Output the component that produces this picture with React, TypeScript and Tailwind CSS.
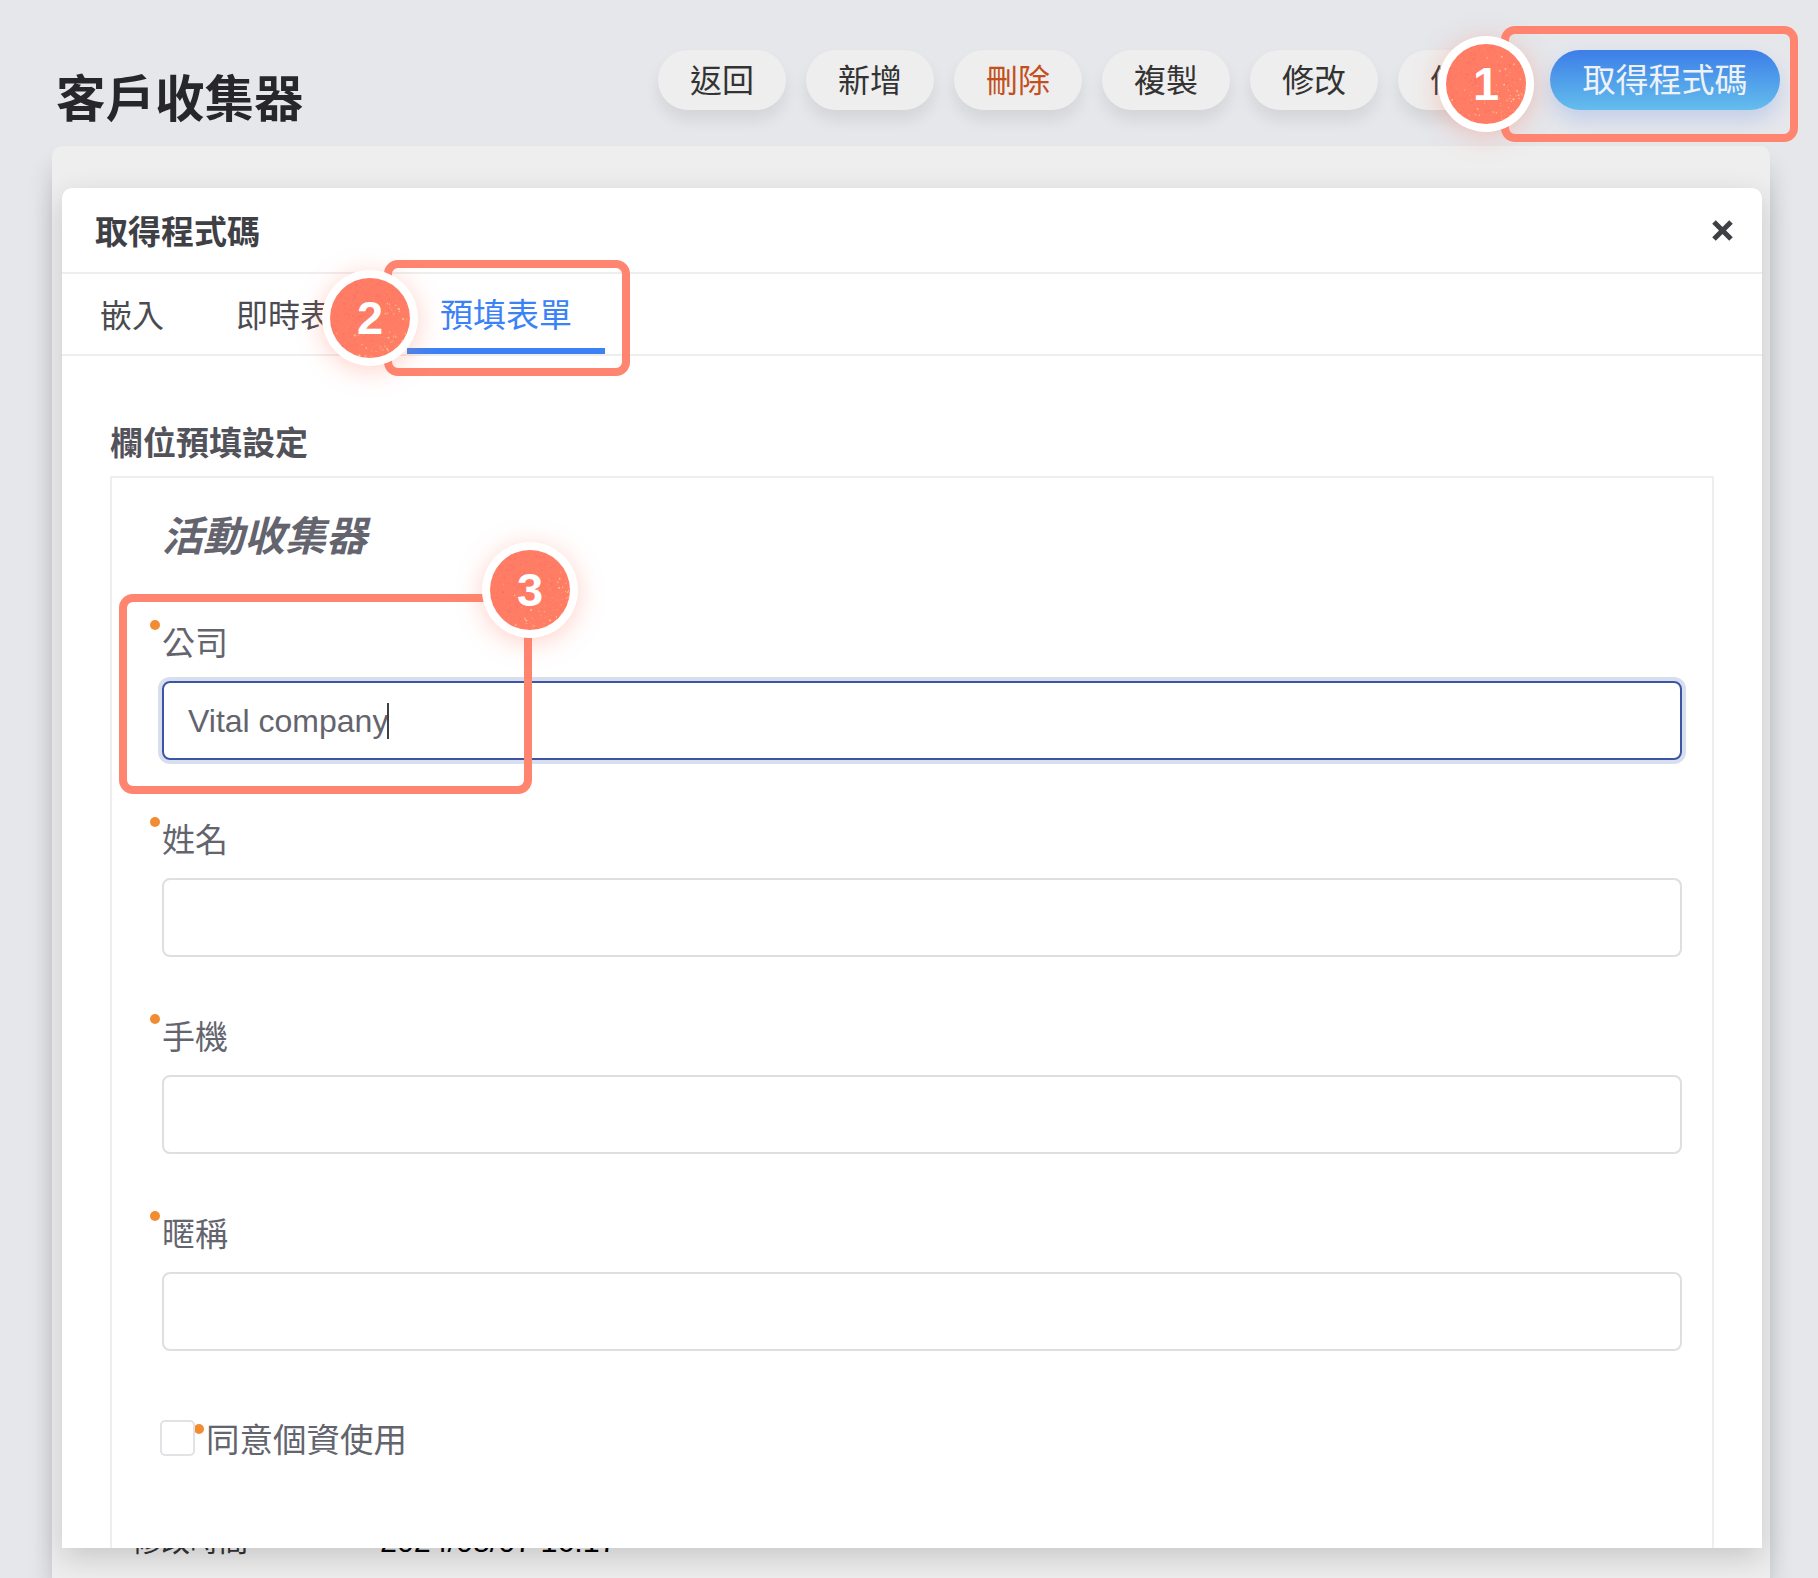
import React from "react";

const CJK = "font-['Noto_Sans_CJK_TC','Noto_Sans_CJK_SC',sans-serif]";

// deterministic speckle texture on the numbered badges
function makeSpeckles(seed: number) {
  let s = seed;
  const next = () => {
    s = (s * 16807) % 2147483647;
    return s / 2147483647;
  };
  const dots: { x: number; y: number; r: number; c: string; o: number }[] = [];
  for (let i = 0; i < 420; i++) {
    const x = next() * 80;
    const y = next() * 80;
    const weight = (x * 0.9 + y * 1.1) / 160;
    const warm = next() < weight * weight * weight * 2.2;
    dots.push({
      x,
      y,
      r: warm ? 0.25 + next() * next() * 1.1 : 0.4 + next() * 0.7,
      c: warm ? "#ffcf8e" : "#f2616b",
      o: warm ? 0.45 + next() * 0.55 : 0.12 + next() * 0.22,
    });
  }
  return dots;
}

function Badge({ n, seed, className }: { n: string; seed: number; className: string }) {
  const dots = makeSpeckles(seed);
  return (
    <div
      className={`absolute h-[96px] w-[96px] rounded-full bg-white shadow-[0_4px_26px_rgba(255,120,95,0.35)] ${className}`}
    >
      <div className="absolute left-[8px] top-[8px] flex h-[80px] w-[80px] items-center justify-center overflow-hidden rounded-full bg-[#ff7c65] pb-[2px]">
        <svg className="absolute inset-0" width="80" height="80" viewBox="0 0 80 80">
          {dots.map((d, i) => (
            <circle key={i} cx={d.x} cy={d.y} r={d.r} fill={d.c} opacity={d.o} />
          ))}
        </svg>
        <span className="relative font-['Liberation_Sans',sans-serif] text-[47px] font-bold leading-none text-white">
          {n}
        </span>
      </div>
    </div>
  );
}

function Field({ label, value, focused }: { label: string; value?: string; focused?: boolean }) {
  return (
    <div className="mb-[53px]">
      <div className="relative h-[48px] text-[33px] leading-[50px] text-[#63646e]">
        <span className="absolute left-[-12px] top-[4px] h-[10px] w-[10px] rounded-full bg-[#f28c33]" />
        {label}
      </div>
      <div
        className={
          focused
            ? "relative mt-[17px] flex h-[79px] w-[1520px] items-center rounded-[8px] border-2 border-[#3b55a5] pl-[24px] shadow-[0_0_0_4px_#d8deed]"
            : "relative mt-[17px] flex h-[79px] w-[1520px] items-center rounded-[8px] border-2 border-[#dedee3] pl-[24px]"
        }
      >
        {value && (
          <span className="font-['Liberation_Sans',sans-serif] text-[32px] leading-[40px] text-[#63646e]">
            {value}
          </span>
        )}
        {focused && <span className="ml-[-1px] h-[36px] w-[2px] bg-[#3f3f46]" />}
      </div>
    </div>
  );
}

export default function App() {
  const pills = [
    { t: "返回", c: "text-[#333333]" },
    { t: "新增", c: "text-[#333333]" },
    { t: "刪除", c: "text-[#c2501e]" },
    { t: "複製", c: "text-[#333333]" },
    { t: "修改", c: "text-[#333333]" },
    { t: "停用", c: "text-[#333333]" },
  ];
  return (
    <div className={`relative h-[1578px] w-full overflow-hidden bg-[#e5e7eb] ${CJK}`}>
      {/* page header */}
      <header className="flex h-[146px] items-start justify-between pl-[56px] pr-[38px] pt-[50px]">
        <h1 className="mt-[12px] text-[49.5px] font-bold leading-[68px] text-[#27272a]">客戶收集器</h1>
        <div className="flex gap-[20px]">
          {pills.map((p) => (
            <button
              key={p.t}
              className={`flex h-[60px] w-[128px] items-center justify-center rounded-full bg-[#eeeeee] pb-[4px] text-[32px] leading-none shadow-[0_10px_15px_rgba(0,0,0,0.08)] ${p.c}`}
            >
              {p.t}
            </button>
          ))}
          <button className="ml-[4px] flex h-[60px] w-[230px] items-center justify-center rounded-full bg-gradient-to-b from-[#3d7de8] to-[#65bdec] pb-[4px] text-[33px] leading-none text-[#eef2f7] shadow-[0_10px_20px_rgba(60,110,230,0.2)]">
            取得程式碼
          </button>
        </div>
      </header>

      {/* page card behind the dialog */}
      <section className="relative ml-[52px] mr-[48px] h-[1432px] rounded-t-[10px] bg-[#eeeeee] pl-[80px] pt-[1373px] shadow-[0_20px_25px_rgba(0,0,0,0.16)]">
        <div className="flex items-start text-[29px] leading-[40px] text-[#333333]">
          <span className="w-[248px]">修改時間</span>
          <span className="mt-[2px] font-['Liberation_Sans',sans-serif] text-[30.4px] text-black">2024/05/07 16:17</span>
        </div>

        {/* dialog */}
        <div className="absolute left-[10px] top-[42px] h-[1360px] w-[1700px] overflow-hidden rounded-t-[10px] bg-white shadow-[0_10px_30px_rgba(0,0,0,0.16)]">
          <div className="flex h-[86px] items-center justify-between border-b-2 border-[#eeeeee] pl-[33px] pr-[29px]">
            <h2 className="text-[33px] font-bold leading-[48px] text-[#3f3f46]">取得程式碼</h2>
            <svg width="21" height="21" viewBox="0 0 21 21" fill="none" stroke="#3f3f46" strokeWidth="5">
              <path d="M2 2 L19 19 M19 2 L2 19" />
            </svg>
          </div>
          <div className="flex h-[82px] gap-[6px] border-b-2 border-[#eeeeee] pl-[5px]">
            <div className="flex h-[78px] items-center px-[33px] text-[32px] text-[#4b4b52]">嵌入</div>
            <div className="flex h-[78px] items-center px-[33px] text-[32px] text-[#4b4b52]">即時表單</div>
            <div className="ml-[4px] flex h-[80px] w-[198px] items-center justify-center border-b-[6px] border-[#3b82f6] pt-[6px] text-[33px] text-[#3b82f6]">
              預填表單
            </div>
          </div>
          <div className="pl-[48px] pr-[48px] pt-[61px]">
            <h3 className="mb-[11px] text-[33px] font-bold leading-[48px] text-[#52525b]">欄位預填設定</h3>
            <div className="h-[1200px] border-2 border-[#eeeeee] pl-[50px] pt-[27px]">
              <div className="mb-[55px] text-[41px] font-bold italic leading-[56px] text-[#63646e]">活動收集器</div>
              <Field label="公司" value="Vital company" focused />
              <Field label="姓名" />
              <Field label="手機" />
              <Field label="暱稱" />
              <div className="mt-[69px] flex h-[36px] items-center">
                <div className="relative z-10 ml-[-2px] h-[36px] w-[35px] rounded-[5px] border-2 border-[#e2e2e6] bg-white" />
                <span className="mb-[18px] ml-[-1px] h-[10px] w-[10px] rounded-full bg-[#f28c33]" />
                <span className="ml-[2px] text-[33.5px] leading-[48px] text-[#63646e]">同意個資使用</span>
              </div>
            </div>
          </div>
        </div>
      </section>

      {/* tutorial annotations */}
      <div className="absolute left-[1501px] top-[26px] h-[116px] w-[297px] rounded-[14px] border-[8px] border-[#ff8570]" />
      <div className="absolute left-[384px] top-[260px] h-[116px] w-[246px] rounded-[14px] border-[8px] border-[#ff8570]" />
      <div className="absolute left-[119px] top-[594px] h-[200px] w-[413px] rounded-[14px] border-[8px] border-[#ff8570]" />
      <Badge n="1" seed={12345} className="left-[1438px] top-[36px]" />
      <Badge n="2" seed={67891} className="left-[322px] top-[270px]" />
      <Badge n="3" seed={24680} className="left-[482px] top-[542px]" />
    </div>
  );
}
